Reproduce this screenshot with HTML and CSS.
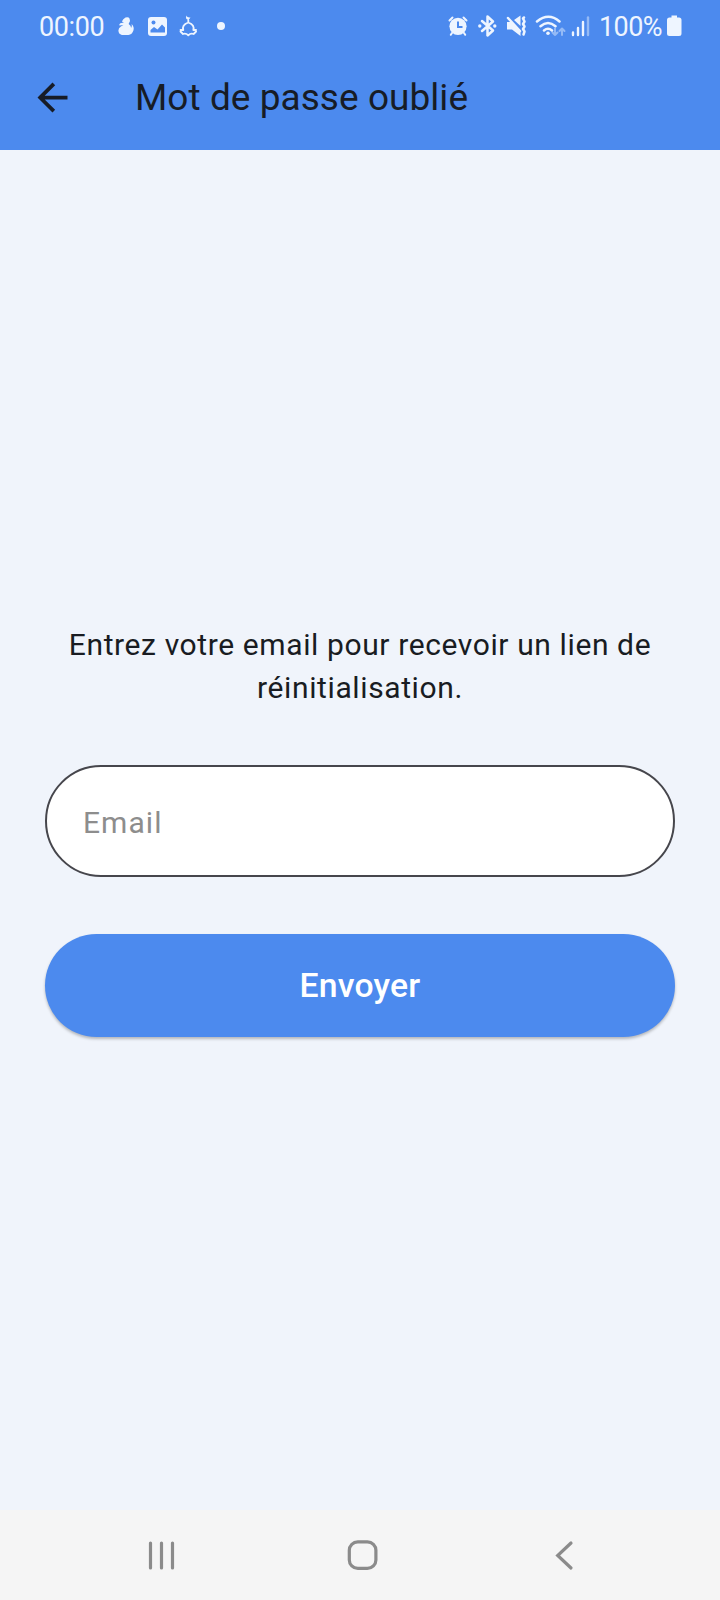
FILE: index.html
```html
<!DOCTYPE html>
<html lang="fr">
<head>
<meta charset="utf-8">
<title>Mot de passe oublié</title>
<link rel="stylesheet" href="styles.css">
</head>
<body>
<div class="screen">
  <header class="header">
    <div class="status">
      <span class="time">00:00</span>
      <svg class="notifications" width="110" height="30" viewBox="116 11 110 30">
        <path class="fill" d="M125.500 17.500q3-1 4 1 1 2-.2 4l-.7 1.500q2.500 1.500 2.500 4 1.300-1.500.5-4 3 3 1.800 6.500-1.300 4-5 4.500h-6.500q-3.500-1-3.500-4.500 0-2.500 2.500-4l2.500-1.500-4 .5q-.5-2 2-2.500l2.500-.5-2-1q1-2.500 3.600-4z"/>
        <rect class="fill" x="148" y="17" width="19" height="19" rx="3"/>
        <circle class="cutout" cx="153.500" cy="22.500" r="2"/>
        <path class="cutout" d="M150.500 32.500v-2.500l3.500-3 3.500 2.500 4.500-5 3 3v5z"/>
        <path class="line dome" d="M180.500 30h2.800c-1.200-3.500 1-6 5-7.500 4 1.500 6.200 4 5 7.500h2.800M188.300 22v-2M180.500 31.500l2.500 2.500q3-1 5.300 1.300 2.300-2.300 5.300-1.300l2.500-2.500"/>
        <path class="fill" d="M186.500 15.500q.5 2.500 4 2-1.500 2.900-3.700 1.800-1.500-1.300-.3-3.800z"/>
        <circle class="fill" cx="221" cy="26" r="4"/>
      </svg>
      <svg class="indicators" width="144" height="30" viewBox="446 11 144 30">
        <circle class="fill" cx="458" cy="26.300" r="8.600"/>
        <path class="line" d="M449.500 20.500l3-3M466.500 20.500l-3-3M452 33l-1.200 1.800M464 33l1.200 1.800"/>
        <path class="mark" d="M458 21.500v5.500h4.500"/>
        <path class="line bold" d="M482 21l11 9.500-5.500 5v-19l5.500 5-11 9.500"/>
        <circle class="fill" cx="479.800" cy="26" r="1.700"/><circle class="fill" cx="494.800" cy="26" r="1.700"/>
        <path class="fill" d="M514 20l6.500-4.500v10.500zM507 22h4l9.500 8.500v5.500l-8.500-6.500h-5z"/>
        <path class="line bold" d="M508 18l12 13"/>
        <path class="line bold" d="M524 17.500l-1 1 1.500 3-1.500 2.500 1.500 2.500-1.500 2.500 1.500 2.500-1 3"/>
        <path class="line bold" d="M537 21.500q11.500-9.500 22.500 0M540.500 26.300q7.500-6.500 15 0M544 30.500q4-3.500 8 0"/>
        <circle class="fill" cx="548" cy="33.300" r="1.800"/>
        <g class="dim"><path class="line" d="M555 28.500v6.500M552.500 32.500l2.500 2.500 2.500-2.500M562 35v-6.500M559.500 31l2.500-2.500 2.500 2.500"/></g>
        <path class="line bars" d="M573 32.500v2.500M578 28v7M583 22v13"/>
        <path class="line bars dim" d="M588 17.500v17.500"/>
      </svg>
      <span class="percent">100%</span>
      <svg class="battery" width="15" height="22" viewBox="0 0 15 22"><path class="fill" d="M4.500.5h5.500v2h2q2.500 0 2.500 2.500v13.500q0 2.500-2.500 2.500h-9.500q-2.500 0-2.500-2.500v-13.500q0-2.500 2.500-2.500h2z"/></svg>
    </div>
    <div class="appbar">
      <svg class="back" width="45" height="45" viewBox="0 0 24 24"><path d="M20 11H7.830l5.590-5.590L12 4l-8 8 8 8 1.410-1.410L7.830 13H20v-2z"/></svg>
      <h1 class="title">Mot de passe oublié</h1>
    </div>
  </header>
  <main class="content">
    <p class="message">Entrez votre email pour recevoir un lien de<br>réinitialisation.</p>
    <input class="email" type="email" placeholder="Email" aria-label="Email">
    <button class="submit" type="button">Envoyer</button>
  </main>
  <nav class="navbar">
    <svg width="32" height="32" viewBox="0 0 32 32"><path d="M4.500 4v25M15.500 4v25M26.500 4v25"/></svg>
    <svg width="32" height="32" viewBox="0 0 32 32"><rect x="2.300" y="2.800" width="26.600" height="26.600" rx="8.500"/></svg>
    <svg width="32" height="32" viewBox="0 0 32 32"><path d="M23 4l-13.300 12.500 13.300 12.500"/></svg>
  </nav>
</div>
</body>
</html>
```
FILE: styles.css
```css
* { box-sizing: border-box; }
body { margin: 0; font-family: Roboto, "Liberation Sans", sans-serif; }
.screen { width: 720px; height: 1600px; display: flex; flex-direction: column; background: #f0f4fb; }
.header { height: 150px; background: #4c8aee; color: #171c26; }
.status { height: 52px; padding: 0 38px 0 39px; display: flex; align-items: center; color: #eef5ff; font-size: 27px; line-height: 32px; }
.status svg { display: block; flex: none; }
.time { width: 77px; padding-top: 1px; letter-spacing: -0.4px; }
.percent { margin-left: 9px; width: 68px; padding-top: 1px; letter-spacing: -0.6px; }
.indicators { margin-left: auto; }
.fill { fill: #eef5ff; }
.cutout { fill: #4c8aee; }
.line { fill: none; stroke: #eef5ff; stroke-width: 2; stroke-linecap: round; stroke-linejoin: round; }
.bold { stroke-width: 2.5; }
.dome { stroke-width: 1.8; }
.mark { fill: none; stroke: #4c8aee; stroke-width: 2; }
.bars { stroke-width: 2.4; }
.dim { opacity: .45; }
.appbar { height: 91px; padding-left: 30px; display: flex; align-items: center; }
.back { fill: #171c26; }
.title { margin: 0 0 0 60px; font-size: 37px; line-height: 44px; font-weight: 400; letter-spacing: .05px; }
.content { flex: 1; padding: 473px 45px 0; display: flex; flex-direction: column; }
.message { margin: 0; text-align: center; color: #191c22; font-size: 30px; line-height: 43px; letter-spacing: .61px; white-space: nowrap; }
.email { margin-top: 56px; height: 112px; padding: 2px 36px 0; border: 2px solid #46464c; border-radius: 56px; background: #fff; font: 30px Roboto, "Liberation Sans", sans-serif; letter-spacing: 1.05px; }
.email::placeholder { color: #8d8d8d; opacity: 1; }
.submit { margin-top: 57px; height: 103px; padding: 0; border: 0; border-radius: 52px; background: #4c8aee; color: #fff; font: 500 33.75px Roboto, "Liberation Sans", sans-serif; letter-spacing: .2px; box-shadow: 0 2px 3px rgba(0,0,0,.25); }
.navbar { height: 90px; padding: 0 140px 0 146px; display: flex; align-items: center; justify-content: space-between; background: #f5f5f5; }
.navbar svg { fill: none; stroke: #8b8b8b; stroke-width: 3.2; stroke-linecap: round; }
```
